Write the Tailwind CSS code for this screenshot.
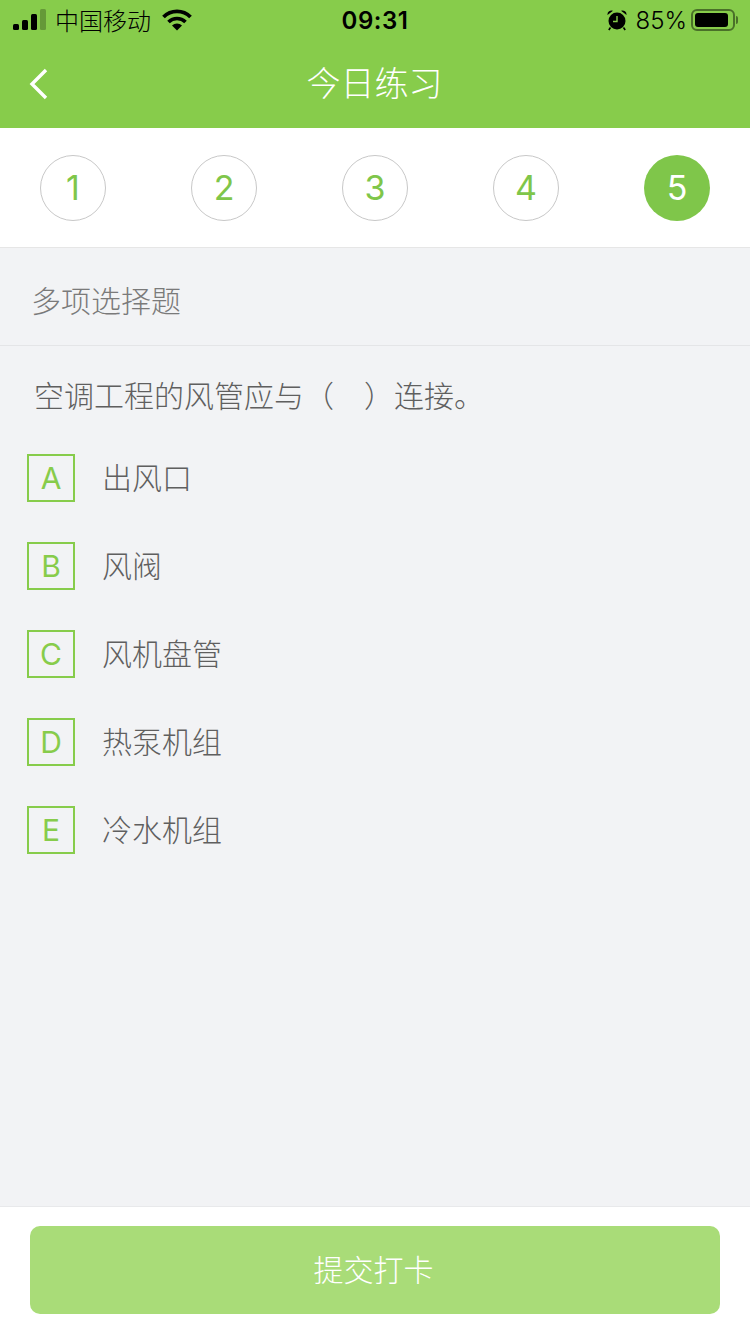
<!DOCTYPE html>
<html lang="zh-CN">
<head>
<meta charset="utf-8">
<script src="https://cdn.jsdelivr.net/npm/@tailwindcss/browser@4"></script>
</head>
<body class="font-['Noto_Sans_CJK_SC',sans-serif]">
<div class="w-[750px] h-[1334px] flex flex-col bg-[#f2f3f5] overflow-hidden">
  <!-- header -->
  <div class="h-[128px] bg-[#87cc4b] flex flex-col shrink-0">
    <div class="h-[40px] flex items-center justify-between relative text-black font-['Inter','Noto_Sans_CJK_SC',sans-serif]">
      <div class="flex items-center pl-[13px]">
        <svg width="34" height="22" viewBox="0 0 34 22" class="block">
          <rect x="0" y="15" width="6" height="6" rx="1.5" fill="#000"/>
          <rect x="9" y="11" width="6" height="10" rx="1.5" fill="#000"/>
          <rect x="18" y="5" width="6" height="16" rx="1.5" fill="#000"/>
          <rect x="27" y="0" width="6" height="21" rx="1.5" fill="#000" fill-opacity="0.25"/>
        </svg>
        <span class="ml-[8px] text-[24px] leading-none font-light font-['Noto_Sans_CJK_SC',sans-serif]">中国移动</span>
        <svg width="30" height="22" viewBox="0 0 30 22" class="block ml-[11px]">
          <path d="M1.5 8 A19 19 0 0 1 28.5 8" fill="none" stroke="#000" stroke-width="3.8"/>
          <path d="M6.5 13 A12 12 0 0 1 23.5 13" fill="none" stroke="#000" stroke-width="3.6"/>
          <path d="M10 16.5 L15 21.5 L20 16.5 A7.5 7.5 0 0 0 10 16.5 Z" fill="#000"/>
        </svg>
      </div>
      <span class="absolute left-0 right-0 mt-[2px] text-center text-[24px] font-semibold leading-none tracking-[0.5px]">09:31</span>
      <div class="flex items-center pr-[12px]">
        <svg width="22" height="22" viewBox="0 0 22 22" class="block">
          <circle cx="11" cy="12" r="8.5" fill="#000"/>
          <path d="M11 7 V12.5 H7" fill="none" stroke="#87cc4b" stroke-width="1.4"/>
          <path d="M1.5 6 A4 4 0 0 1 7 1.8 Z M20.5 6 A4 4 0 0 0 15 1.8 Z" fill="#000"/>
          <path d="M4.5 18.5 L2.8 21 M17.5 18.5 L19.2 21" stroke="#000" stroke-width="1.6"/>
        </svg>
        <span class="ml-[8px] mt-[2px] text-[24px] leading-none font-light">85%</span>
        <div class="ml-[4px] w-[44px] h-[22px] rounded-[6px] border-2 border-black/45 p-[2px]">
          <div class="w-[33px] h-full rounded-[3px] bg-black"></div>
        </div>
        <div class="ml-[1px] w-[2px] h-[8px] rounded-r-sm bg-black/45"></div>
      </div>
    </div>
    <div class="h-[88px] relative flex items-center justify-center">
      <svg width="20" height="32" viewBox="0 0 20 32" class="absolute left-[29px] top-[28px]">
        <path d="M17 2 L3 16 L17 30" fill="none" stroke="#fff" stroke-width="3.4"/>
      </svg>
      <span class="text-white text-[34px] leading-none font-light mb-[4px] mr-[1px]">今日练习</span>
    </div>
  </div>

  <!-- steps -->
  <div class="h-[120px] bg-white border-b border-[#e6e6e6] px-[40px] flex items-center justify-between shrink-0">
    <div class="w-[66px] h-[66px] rounded-full border border-[#c8c8c8] flex items-center justify-center text-[#7fc64a] text-[34px] font-['Inter',sans-serif] font-normal">1</div>
    <div class="w-[66px] h-[66px] rounded-full border border-[#c8c8c8] flex items-center justify-center text-[#7fc64a] text-[34px] font-['Inter',sans-serif] font-normal">2</div>
    <div class="w-[66px] h-[66px] rounded-full border border-[#c8c8c8] flex items-center justify-center text-[#7fc64a] text-[34px] font-['Inter',sans-serif] font-normal">3</div>
    <div class="w-[66px] h-[66px] rounded-full border border-[#c8c8c8] flex items-center justify-center text-[#7fc64a] text-[34px] font-['Inter',sans-serif] font-normal">4</div>
    <div class="w-[66px] h-[66px] rounded-full bg-[#7fc64a] flex items-center justify-center text-white text-[34px] font-['Inter',sans-serif] font-normal">5</div>
  </div>

  <!-- type -->
  <div class="h-[98px] border-b border-[#e4e5e7] pl-[31px] pt-[4px] flex items-center shrink-0 text-[#7a7a7a] text-[30px] leading-none font-light">多项选择题</div>

  <!-- question -->
  <div class="flex-1 flex flex-col">
    <div class="pl-[34px] pt-[33px] text-[30px] leading-[30px] text-[#5f5f5f] font-light flex"><span>空调工程的风管应与（</span><span class="ml-[30px]">）连接。</span></div>
    <div class="flex flex-col gap-[40px] pl-[27px] pt-[45px]">
      <div class="flex items-center h-[48px]">
        <div class="w-[48px] h-[48px] border-2 border-[#87cc4b] flex items-center justify-center text-[#87cc4b] text-[30px] font-['Inter',sans-serif] font-normal">A</div>
        <span class="ml-[27px] mb-[4px] text-[30px] leading-none text-[#5f5f5f] font-light">出风口</span>
      </div>
      <div class="flex items-center h-[48px]">
        <div class="w-[48px] h-[48px] border-2 border-[#87cc4b] flex items-center justify-center text-[#87cc4b] text-[30px] font-['Inter',sans-serif] font-normal">B</div>
        <span class="ml-[27px] mb-[4px] text-[30px] leading-none text-[#5f5f5f] font-light">风阀</span>
      </div>
      <div class="flex items-center h-[48px]">
        <div class="w-[48px] h-[48px] border-2 border-[#87cc4b] flex items-center justify-center text-[#87cc4b] text-[30px] font-['Inter',sans-serif] font-normal">C</div>
        <span class="ml-[27px] mb-[4px] text-[30px] leading-none text-[#5f5f5f] font-light">风机盘管</span>
      </div>
      <div class="flex items-center h-[48px]">
        <div class="w-[48px] h-[48px] border-2 border-[#87cc4b] flex items-center justify-center text-[#87cc4b] text-[30px] font-['Inter',sans-serif] font-normal">D</div>
        <span class="ml-[27px] mb-[4px] text-[30px] leading-none text-[#5f5f5f] font-light">热泵机组</span>
      </div>
      <div class="flex items-center h-[48px]">
        <div class="w-[48px] h-[48px] border-2 border-[#87cc4b] flex items-center justify-center text-[#87cc4b] text-[30px] font-['Inter',sans-serif] font-normal">E</div>
        <span class="ml-[27px] mb-[4px] text-[30px] leading-none text-[#5f5f5f] font-light">冷水机组</span>
      </div>
    </div>
  </div>

  <!-- footer -->
  <div class="h-[128px] bg-white border-t border-[#e8e9eb] px-[30px] pt-[19px] shrink-0">
    <div class="h-[88px] rounded-[10px] bg-[#a9dc78] flex items-center justify-center text-white text-[30px] leading-none font-light pb-[4px] pr-[3px]">提交打卡</div>
  </div>
</div>
</body>
</html>
